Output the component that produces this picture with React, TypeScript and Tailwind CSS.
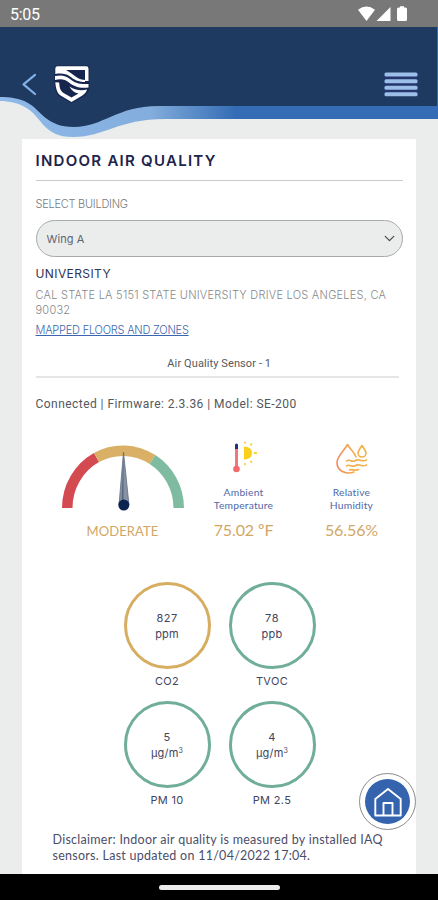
import React from 'react';
import { ChevronDown } from 'lucide-react';

interface Pollutant {
  id: string;
  value: string;
  unit: string;
  exponent?: string;
  label: string;
  ring: string;
}

const pollutants: Pollutant[] = [
  { id: 'co2', value: '827', unit: 'ppm', label: 'CO2', ring: 'border-[#d7ad60]' },
  { id: 'tvoc', value: '78', unit: 'ppb', label: 'TVOC', ring: 'border-[#70ae98]' },
  { id: 'pm10', value: '5', unit: 'µg/m', exponent: '3', label: 'PM 10', ring: 'border-[#70ae98]' },
  { id: 'pm25', value: '4', unit: 'µg/m', exponent: '3', label: 'PM 2.5', ring: 'border-[#70ae98]' },
];

const StatusBar: React.FC = () => (
  <div className="flex h-[27px] shrink-0 items-center justify-between bg-[#787878] pl-[10px] pr-[30px] text-white">
    <span className="pt-[2px] font-['Roboto',sans-serif] text-[16px] leading-none tracking-[-0.3px]">5:05</span>
    <svg className="mt-[1px] h-[16px] w-[50px]" viewBox="0 0 50 16" fill="currentColor">
      <path d="M0 3.8Q8.5-2.6 17 3.8L8.5 15Z" />
      <path d="M32.5 1v14H18.5Z" />
      <path d="M42 1.5V.3h4v1.2h1.5q1.5 0 1.5 1.5v10.5q0 1.5-1.5 1.5h-7q-1.5 0-1.5-1.5V3q0-1.5 1.5-1.5Z" />
    </svg>
  </div>
);

const Header: React.FC = () => (
  <header className="relative h-[112px] shrink-0">
    {/* Wave background */}
    <svg className="absolute inset-0 h-full w-full" viewBox="0 0 438 112" preserveAspectRatio="none">
      <defs>
        <linearGradient id="wave" gradientUnits="userSpaceOnUse" x1="0" y1="0" x2="235" y2="0">
          <stop offset="0" stopColor="#8fb9e8" />
          <stop offset="0.64" stopColor="#83addc" />
          <stop offset="1" stopColor="#346db5" />
        </linearGradient>
      </defs>
      <path d="M0 0H438V92H165C118 92 105 110 73 110C44 110 42 91 28 82C20 76 8 74 0 74Z" fill="url(#wave)" />
      <path d="M0 0H437V79H158C117 79 103 100 74 100C46 100 41 83 28 76C20 71 9 70 0 70Z" fill="#1e3a61" />
    </svg>

    <div className="relative flex items-start justify-between pl-[21px] pr-[20px] pt-[37px]">
      <div className="flex">
        <svg className="mt-[9px] h-[23px] w-[16px]" viewBox="0 0 16 23" fill="none" stroke="#83b1e7" strokeWidth="2.2" strokeLinecap="round" strokeLinejoin="round">
          <path d="M14 1.8L2.5 11.3L14 21" />
        </svg>
        <svg className="ml-[16px] h-[40px] w-[38px]" viewBox="0 0 38 40">
          <path d="M1.5 4Q1.500 1.500 4 1.500H34Q36.500 1.500 36.500 4V24Q35.500 30 30 33L18.500 39L7 33Q1.500 29 1.500 20Z" fill="#17264f" />
          <g fill="#fff">
            <path d="M2.300 10V4.500Q2.300 2.300 4.500 2.300H33.300Q35.500 2.300 35.500 4.500V17H32V6H13C17 8 20 11 24 13.500C27 15.300 30 16 32 16V18C25 18 21 15.500 17 12.500C13 9.500 8 9 2.300 10Z" />
            <path d="M2 12C9 10.500 13 12 17 15C22 19 26 20.500 35.500 20V23.500C26 24.500 21 22.500 16 18.500C12 15.500 8 14.500 2 16Z" />
            <path d="M2.300 18.300C3 27 5 29.800 8 31.800L18.500 38L29 31.800C32 29.800 33.500 28 34 25.600C28 26.800 22 26.500 16.500 22.500C18.500 26.500 21.500 28.800 25.500 29.500L18.500 33.500L10.500 29C8 27 6.500 25 6.200 18.500Z" />
          </g>
        </svg>
      </div>
      <svg className="mt-[8px] h-[25px] w-[34px]" viewBox="0 0 34 25" fill="#9bbfe8">
        <rect x="0" y="4" width="34" height="3.500" fill="#25366f" />
        <rect x="0" y="10.500" width="34" height="3.500" fill="#25366f" />
        <rect x="0" y="17" width="34" height="3.500" fill="#25366f" />
        <rect x="0.500" y="0.500" width="33" height="4" rx="1.500" />
        <rect x="0.500" y="7.200" width="33" height="4" rx="1.500" />
        <rect x="0.500" y="13.800" width="33" height="4" rx="1.500" />
        <rect x="0.500" y="20.300" width="33" height="4" rx="1.500" />
      </svg>
    </div>
  </header>
);

const Gauge: React.FC = () => (
  <svg className="h-[68px] w-[124px]" viewBox="0 0 124 68" fill="none">
    <g strokeWidth="10.500">
      <path d="M6.250 64A55.750 57.500 0 0 1 35.500 13.500" stroke="#d44a51" />
      <path d="M35.500 13.500A55.750 57.500 0 0 1 91.500 15.500" stroke="#d9b066" />
      <path d="M91.500 15.500A55.750 57.500 0 0 1 117.750 64" stroke="#7ebba1" />
    </g>
    <path d="M62.500 8L58 61H68Z" fill="#8793a3" />
    <path d="M62.500 8L60.500 61H62.500Z" fill="#57677f" />
    <path d="M62.500 8L58 61M62.500 8L68 61" stroke="#5f6c80" strokeWidth="0.800" />
    <circle cx="62.800" cy="61" r="5.500" fill="#0c2352" />
  </svg>
);

const TemperatureIcon: React.FC = () => (
  <svg className="h-[34px] w-[28px]" viewBox="0 0 28 34" fill="none">
    <rect x="5" y="3" width="3" height="25" rx="1.500" fill="#f2767a" />
    <path d="M5 8V3.500Q6.500 1.500 8 3.500V8Z" fill="#16357d" />
    <circle cx="6.500" cy="28" r="3.300" fill="#f2696c" />
    <path d="M14 6A6.700 6.700 0 0 1 14 18.500Z" fill="#fad01d" />
    <path d="M14 5.500Q22 6 22 12T14 18.500Z" fill="#fad01d" />
    <g stroke="#fbd335" strokeWidth="2" strokeLinecap="round">
      <path d="M15 1.500V1.800M21 3.600L21.300 3.200M24.500 12H26.200M21 20.500L21.300 20.900M15 23V23.300" />
    </g>
  </svg>
);

const HumidityIcon: React.FC = () => (
  <svg className="h-[34px] w-[34px]" viewBox="0 0 34 34" fill="none" strokeWidth="1.600" strokeLinecap="round" strokeLinejoin="round">
    <defs>
      <linearGradient id="drop" x1="0" y1="0" x2="1" y2="0">
        <stop offset="0" stopColor="#f28a63" />
        <stop offset="1" stopColor="#f3b247" />
      </linearGradient>
    </defs>
    <path d="M19 31C11 34 2 30 2 21.500C2 15.500 9 10 12.500 3.500C16 9.500 19.500 11 21 16" stroke="url(#drop)" />
    <path d="M27 4.500C25 8 23 9.500 23 12A4 4 0 0 0 31 12C31 9.500 29 8 27 4.500Z" stroke="#f2b04a" />
    <g stroke="#f2ae4b">
      <path d="M11.500 20C14.500 17.500 17 22 20.500 19.500C24 17 27 22 31.500 18.800" />
      <path d="M11.500 25C14.500 22.500 17 27 20.500 24.500C24 22 27 27 31.500 23.800" />
      <path d="M14.500 29C17 27.500 20 30.500 23.500 28.500" />
    </g>
  </svg>
);

interface ReadingProps {
  icon: React.ReactNode;
  title: [string, string];
  value: string;
}

const Reading: React.FC<ReadingProps> = ({ icon, title, value }) => (
  <div className="flex w-[108px] flex-col items-center">
    {icon}
    <p className="mt-[11px] text-center font-['Lato',sans-serif] text-[10.3px] leading-[13px] tracking-[0.2px] text-[#5068a8]">
      {title[0]}
      <br />
      {title[1]}
    </p>
    <p className="mt-[6px] font-['Lato',sans-serif] text-[16px] leading-[24px] tracking-[-0.1px] text-[#d2a766]">{value}</p>
  </div>
);

const PollutantRing: React.FC<{ item: Pollutant }> = ({ item }) => (
  <div className="flex flex-col items-center text-[11px] text-[#41455f]">
    <div className={`flex h-[87px] w-[87px] flex-col items-center justify-center rounded-full border-[3px] leading-[16px] ${item.ring}`}>
      <span className="tracking-[0.5px]">{item.value}</span>
      <span className="tracking-[0.2px]">
        {item.unit}
        {item.exponent && <sup className="text-[7px] leading-none">{item.exponent}</sup>}
      </span>
    </div>
    <span className="mt-[4px] leading-[16px] tracking-[0.35px]">{item.label}</span>
  </div>
);

const App: React.FC = () => {
  return (
    <div className="flex h-[900px] w-[438px] flex-col overflow-hidden bg-[#ebedec] font-['Inter',sans-serif]">
      <StatusBar />
      <Header />

      <main className="relative ml-[22px] flex w-[394px] flex-1 flex-col bg-white pl-[13.5px] pr-[13px]">
        <h1 className="pt-[12px] text-[15px] font-semibold leading-[20px] tracking-[1.27px] text-[#20234a]">INDOOR AIR QUALITY</h1>
        <div className="mt-[9px] h-px bg-[#c9cac9]" />

        <label className="mt-[15px] text-[11px] font-light leading-[16px] tracking-[-0.25px] text-[#777b7c]">SELECT BUILDING</label>
        <button className="mt-[8px] flex h-[37px] w-full items-center justify-between rounded-full border border-[#a8abab] bg-[#ebeded] pl-[10px] pr-[4px] text-left text-[11px] text-[#60646d]">
          <span className="pt-[2px] tracking-[0.1px]">Wing A</span>
          <ChevronDown className="h-[17px] w-[17px] text-[#484c4e]" strokeWidth={1.8} />
        </button>

        <h2 className="mt-[9px] text-[12px] leading-[16px] tracking-[0.4px] text-[#303456]">UNIVERSITY</h2>
        <p className="mt-[6px] whitespace-nowrap text-[11px] font-light leading-[15px] tracking-[0.25px] text-[#85888b]">
          CAL STATE LA 5151 STATE UNIVERSITY DRIVE LOS ANGELES, CA
          <br />
          90032
        </p>
        <a href="#zones" className="mt-[4px] self-start text-[11px] font-light leading-[16px] tracking-[-0.22px] text-[#3b65ad] underline">
          MAPPED FLOORS AND ZONES
        </a>

        <p className="mt-[18px] text-center font-['Roboto',sans-serif] text-[11px] leading-[16px] tracking-[0.1px] text-[#56595c]">Air Quality Sensor - 1</p>
        <div className="mr-[4px] mt-[4px] h-[2px] bg-[#e4e5e5]" />
        <p className="mt-[18px] font-['Roboto',sans-serif] text-[12px] leading-[16px] tracking-[0.45px] text-[#54575c]">
          Connected | Firmware: 2.3.36 | Model: SE-200
        </p>

        {/* Current readings */}
        <section className="mt-[29px] flex">
          <div className="ml-[25px] flex w-[124px] flex-col items-center pt-[3px]">
            <Gauge />
            <p className="mt-[9px] font-['Lato',sans-serif] text-[13px] leading-[20px] tracking-[0.1px] text-[#d2a766]">MODERATE</p>
          </div>
          <div className="ml-[5px] flex">
            <Reading icon={<TemperatureIcon />} title={['Ambient', 'Temperature']} value="75.02 ºF" />
            <Reading icon={<HumidityIcon />} title={['Relative', 'Humidity']} value="56.56%" />
          </div>
        </section>

        <section className="ml-[88px] mt-[40px] grid grid-cols-[87px_87px] gap-x-[18px] gap-y-[12px]">
          {pollutants.map((item) => (
            <PollutantRing key={item.id} item={item} />
          ))}
        </section>

        <p className="ml-[17px] mt-[24px] whitespace-nowrap font-['Lato',sans-serif] text-[12.5px] leading-[16px] tracking-[0.27px] text-[#4c4e69]">
          Disclaimer: Indoor air quality is measured by installed IAQ
          <br />
          sensors. Last updated on 11/04/2022 17:04.
        </p>

        {/* Floating home button */}
        <button className="absolute left-[337px] top-[634px] flex h-[57px] w-[57px] items-center justify-center rounded-full border border-[#8b8b8b] bg-white">
          <span className="flex h-[45px] w-[45px] items-center justify-center rounded-full bg-[#3464ae]">
            <svg className="h-[32px] w-[32px]" viewBox="0 0 32 32" fill="none" stroke="#fff" strokeWidth="1.9" strokeLinejoin="round">
              <path d="M3.300 13L16 3L28.700 13V29.500H3.300Z" />
              <path d="M11.500 29V17H20.500V29" />
            </svg>
          </span>
        </button>
      </main>

      <footer className="flex h-[26px] shrink-0 items-center justify-center bg-black">
        <div className="h-[5px] w-[121px] rounded-full bg-[#ececec]" />
      </footer>
    </div>
  );
};

export default App;
